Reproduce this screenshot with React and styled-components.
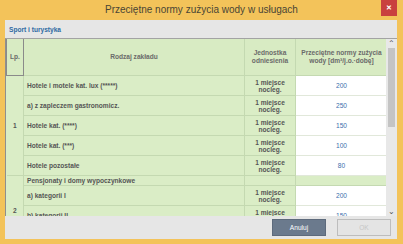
import React from 'react';
import styled, { createGlobalStyle } from 'styled-components';

const GlobalStyle = createGlobalStyle`
  html, body {
    margin: 0;
    padding: 0;
    overflow: hidden;
    background: #f3c35a;
  }
`;

const groups = [
  {
    lp: '1',
    rows: [
      { name: 'Hotele i motele kat. lux (*****)', unit: true, value: '200' },
      { name: 'a) z zapleczem gastronomicz.', unit: true, value: '250' },
      { name: 'Hotele kat. (****)', unit: true, value: '150' },
      { name: 'Hotele kat. (***)', unit: true, value: '100' },
      { name: 'Hotele pozostałe', unit: true, value: '80' },
    ],
  },
  {
    lp: '2',
    rows: [
      { name: 'Pensjonaty i domy wypoczynkowe', group: true },
      { name: 'a) kategorii I', unit: true, value: '200' },
      { name: 'b) kategorii II', unit: true, value: '150' },
      { name: 'c) kategorii III', unit: true, value: '120' },
    ],
  },
];

const App = () => (
  <>
    <GlobalStyle />
    <Window>
      <TitleBar>
        <span />
        <Title>Przeciętne normy zużycia wody w usługach</Title>
        <CloseButton type="button">✕</CloseButton>
      </TitleBar>
      <Body>
        <SectionLabel>Sport i turystyka</SectionLabel>
        <TableArea>
          <ScrollBox>
            <Table>
              <colgroup>
                <col style={{ width: 17 }} />
                <col style={{ width: 221 }} />
                <col style={{ width: 51 }} />
                <col style={{ width: 92 }} />
              </colgroup>
              <thead>
                <tr>
                  <HeadCell $lp>Lp.</HeadCell>
                  <HeadCell>Rodzaj zakładu</HeadCell>
                  <HeadCell>Jednostka<br />odniesienia</HeadCell>
                  <HeadCell>Przeciętne normy zużycia<br />wody [dm³/j.o.·dobę]</HeadCell>
                </tr>
              </thead>
              <tbody>
                {groups.map((g) => g.rows.map((r, i) => (
                  <Row key={g.lp + r.name} $group={r.group}>
                    {i === 0 && <LpCell rowSpan={g.rows.length}>{g.lp}</LpCell>}
                    <NameCell>{r.name}</NameCell>
                    <UnitCell>{r.unit && <>1 miejsce<br />nocleg.</>}</UnitCell>
                    <ValueCell $empty={r.group}>{r.value}</ValueCell>
                  </Row>
                )))}
              </tbody>
            </Table>
          </ScrollBox>
          <ScrollBar>
            <Arrow>&#8963;</Arrow>
            <Track>
              <Thumb />
            </Track>
            <Arrow>&#8964;</Arrow>
          </ScrollBar>
        </TableArea>
        <Footer>
          <Button type="button" $primary>Anuluj</Button>
          <Button type="button" disabled>OK</Button>
        </Footer>
      </Body>
    </Window>
  </>
);

const Window = styled.div`
  width: 403px;
  height: 244px;
  background: #f3c35a;
  display: flex;
  flex-direction: column;
  font-family: "Liberation Sans", Arial, sans-serif;
`;

const TitleBar = styled.div`
  height: 20px;
  display: grid;
  grid-template-columns: 22px 1fr 22px;
  align-items: start;
`;

const Title = styled.div`
  text-align: center;
  font-size: 10px;
  line-height: 19px;
  color: #4a4535;
`;

const CloseButton = styled.button`
  width: 16px;
  height: 16px;
  padding: 0;
  border: none;
  background: #c9403f;
  color: #fff;
  font-size: 7px;
  font-weight: bold;
  line-height: 16px;
`;

const Body = styled.div`
  flex: 1;
  margin: 0 6px 5px 5px;
  background: #e6e6e6;
  display: flex;
  flex-direction: column;
`;

const SectionLabel = styled.div`
  height: 18px;
  padding-left: 4px;
  display: flex;
  align-items: center;
  font-size: 6.6px;
  font-weight: bold;
  color: #2f6aa3;
`;

const TableArea = styled.div`
  height: 177px;
  display: flex;
  border-top: 1px solid #a3a3a3;
  border-left: 1px solid #8f8f8f;
`;

const ScrollBox = styled.div`
  flex: 1;
  overflow: hidden;
  background: #daedc6;
`;

const Table = styled.table`
  width: 380px;
  table-layout: fixed;
  border-collapse: collapse;
  font-size: 6.6px;
  font-weight: bold;
  color: #5a5a5a;
`;

const HeadCell = styled.th`
  height: 36px;
  padding: 0;
  background: #d8ebc3;
  border: 1px solid ${(p) => (p.$lp ? '#8a8a8a' : '#c4d9b1')};
  border-top: none;
  font-weight: bold;
  line-height: 8px;
  color: #6a6a6a;
  text-align: center;
`;

const Row = styled.tr`
  height: ${(p) => (p.$group ? '10px' : '20px')};
`;

const Cell = styled.td`
  padding: 0;
  border: 1px solid #c4d9b1;
  line-height: 7px;
`;

const LpCell = styled(Cell)`
  text-align: center;
  border-left: none;
  color: #555;
`;

const NameCell = styled(Cell)`
  padding-left: 3px;
  color: #555;
`;

const UnitCell = styled(Cell)`
  text-align: center;
  color: #555;
`;

const ValueCell = styled(Cell)`
  text-align: center;
  background: ${(p) => (p.$empty ? '#daedc6' : '#fff')};
  border-color: ${(p) => (p.$empty ? '#c4d9b1' : '#e1e8da')};
  color: #3c6fae;
  font-weight: normal;
`;

const ScrollBar = styled.div`
  width: 11px;
  display: flex;
  flex-direction: column;
  background: #e8e8e8;
`;

const Arrow = styled.div`
  height: 9px;
  font-size: 8px;
  line-height: 9px;
  text-align: center;
  color: #555;
`;

const Track = styled.div`
  flex: 1;
  padding: 0 2px;
`;

const Thumb = styled.div`
  height: 79px;
  background: #c4c4c4;
`;

const Footer = styled.div`
  flex: 1;
  display: flex;
  justify-content: flex-end;
  align-items: center;
  gap: 11px;
  padding-right: 6px;
`;

const Button = styled.button`
  width: 54px;
  height: 17px;
  padding: 0;
  font-family: "Liberation Sans", Arial, sans-serif;
  font-size: 6.6px;
  background: ${(p) => (p.$primary ? '#6b7a8d' : '#e4e4e4')};
  color: ${(p) => (p.$primary ? '#fff' : '#c6c6c6')};
  border: 1px solid ${(p) => (p.$primary ? '#5d6a7c' : '#bdbdbd')};
`;

export default App;
